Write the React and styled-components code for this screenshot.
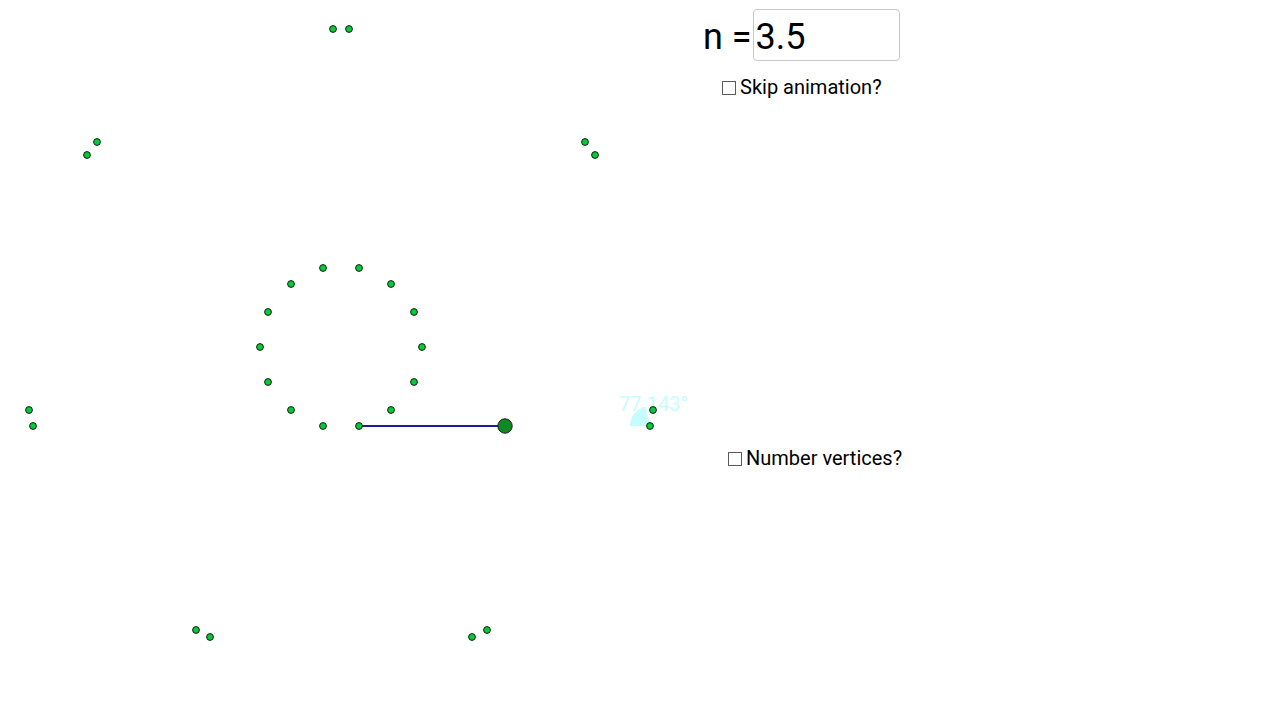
import React from "react";
import styled, { createGlobalStyle } from "styled-components";

const GlobalStyle = createGlobalStyle`
  html, body {
    margin: 0;
    padding: 0;
    background: #fff;
    overflow: hidden;
  }
  body {
    font-family: Roboto, "Liberation Sans", sans-serif;
  }
`;

// vertex positions of the star polygon (canvas coords)
const innerPoints = [
  [323, 268], [359, 268], [391, 284], [414, 312], [422, 347], [414, 382], [391, 410],
  [359, 426], [323, 426], [291, 410], [268, 382], [260, 347], [268, 312], [291, 284],
];

const outerPoints = [
  [333, 29], [349, 29], [97, 142], [87, 155], [585, 142], [595, 155],
  [29, 410], [33, 426], [653, 410], [650, 426], [196, 630], [210, 637],
  [472, 637], [487, 630],
];

function sectorPath(cx, cy, r, fromDeg, toDeg) {
  const rad = (d) => (d * Math.PI) / 180;
  const x1 = cx + r * Math.cos(rad(fromDeg));
  const y1 = cy - r * Math.sin(rad(fromDeg));
  const x2 = cx + r * Math.cos(rad(toDeg));
  const y2 = cy - r * Math.sin(rad(toDeg));
  return `M${cx} ${cy} L${x1} ${y1} A${r} ${r} 0 0 0 ${x2} ${y2} Z`;
}

function App() {
  return (
    <>
      <GlobalStyle />
      <Stage>
        <Canvas width="1280" height="720" viewBox="0 0 1280 720">
          <path d={sectorPath(650, 426, 20, 102.857, 180)} fill="#c6fbff" />
          <AngleLabel x="619" y="411">77.143°</AngleLabel>
          <line x1="359" y1="426" x2="505" y2="426" stroke="#1c1c9c" strokeWidth="2.2" />
          {[...innerPoints, ...outerPoints].map(([x, y], i) => (
            <circle key={i} cx={x} cy={y} r="3.4" fill="#00cc33" stroke="#1a1a1a" strokeWidth="1" />
          ))}
          <circle cx="505" cy="426" r="7.2" fill="#0d8a22" stroke="#1a1a1a" strokeWidth="1" />
        </Canvas>

        <InputRow>
          <BigLabel>n =</BigLabel>
          <NumberBox>3.5</NumberBox>
        </InputRow>

        <Toggle $left={722} $top={75}>
          <Box />
          Skip animation?
        </Toggle>

        <Toggle $left={728} $top={446}>
          <Box />
          Number vertices?
        </Toggle>
      </Stage>
    </>
  );
}

const Stage = styled.div`
  position: relative;
  width: 1280px;
  height: 720px;
  background: #fff;
  overflow: hidden;
`;

const Canvas = styled.svg`
  position: absolute;
  top: 0;
  left: 0;
  display: block;
`;

const AngleLabel = styled.text`
  font-family: Roboto, "Liberation Sans", sans-serif;
  font-size: 20px;
  font-weight: 400;
  fill: #c9fcff;
`;

const InputRow = styled.div`
  position: absolute;
  left: 703px;
  top: 9px;
  display: flex;
  align-items: center;
  height: 52px;
`;

const BigLabel = styled.span`
  font-size: 36px;
  color: #000;
  line-height: 1;
  margin-right: 1px;
  padding-top: 3px;
`;

const NumberBox = styled.div`
  box-sizing: border-box;
  width: 147px;
  height: 52px;
  border: 1px solid #c8c8c8;
  border-radius: 4px;
  padding: 4px 0 0 2px;
  display: flex;
  align-items: center;
  font-size: 36px;
  color: #000;
`;

const Toggle = styled.label`
  position: absolute;
  left: ${(p) => p.$left}px;
  top: ${(p) => p.$top}px;
  display: flex;
  align-items: center;
  font-size: 20px;
  color: #000;
  line-height: 24px;
  white-space: nowrap;
`;

const Box = styled.span`
  box-sizing: border-box;
  width: 14px;
  height: 14px;
  border: 1px solid #5a5a5a;
  background: #fff;
  margin-right: 4px;
  margin-top: 1px;
`;

export default App;
